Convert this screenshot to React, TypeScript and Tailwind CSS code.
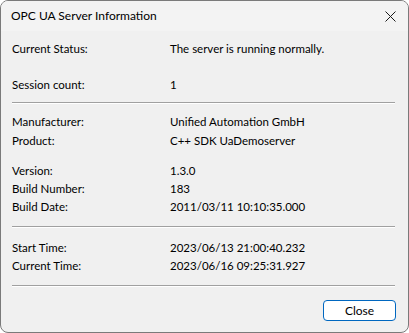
import React from "react";

const Row = ({ label, value }: { label: string; value: string }) => (
  <div className="flex h-[18px] items-center">
    <div className="w-[158px] shrink-0">{label}</div>
    <div>{value}</div>
  </div>
);

const Sep = () => (
  <div className="mr-[13px] h-[2px] border-t border-[#a0a0a0] bg-white" />
);

export default function App() {
  return (
    <div className="h-[333px] w-[409px] bg-white">
      <div
        className="flex h-[333px] w-[409px] flex-col overflow-hidden rounded-[8px] border border-[#7a7a7a] bg-[#f0f0f0] text-[11.5px] text-black"
        style={{ fontFamily: 'Lato, "Open Sans", sans-serif' }}
      >
        <div className="flex h-[30px] shrink-0 items-center justify-between bg-[#f3f3f3] pl-[10px] pr-[11px]">
          <span className="text-[12px]">OPC UA Server Information</span>
          <svg width="11" height="11" viewBox="0 0 11 11" className="mr-[1px]">
            <path d="M0.5 0.5 L10.5 10.5 M10.5 0.5 L0.5 10.5" stroke="#1a1a1a" strokeWidth="1" />
          </svg>
        </div>
        <div className="flex flex-1 flex-col pl-[11px] pt-[9px]">
          <Row label="Current Status:" value="The server is running normally." />
          <div className="h-[18px]" />
          <Row label="Session count:" value="1" />
          <div className="h-[8px]" />
          <Sep />
          <div className="h-[9px]" />
          <Row label="Manufacturer:" value="Unified Automation GmbH" />
          <div className="h-[1px]" />
          <Row label="Product:" value="C++ SDK UaDemoserver" />
          <div className="h-[12px]" />
          <Row label="Version:" value="1.3.0" />
          <Row label="Build Number:" value="183" />
          <Row label="Build Date:" value="2011/03/11 10:10:35.000" />
          <div className="h-[10px]" />
          <Sep />
          <div className="h-[11px]" />
          <Row label="Start Time:" value="2023/06/13 21:00:40.232" />
          <Row label="Current Time:" value="2023/06/16 09:25:31.927" />
          <div className="h-[10px]" />
          <Sep />
          <div className="flex justify-end pr-[12px] pt-[13px]">
            <button className="flex h-[21px] w-[73px] items-center justify-center rounded-[4px] border border-[#0067c0] bg-white text-[12px]">
              Close
            </button>
          </div>
        </div>
      </div>
    </div>
  );
}
